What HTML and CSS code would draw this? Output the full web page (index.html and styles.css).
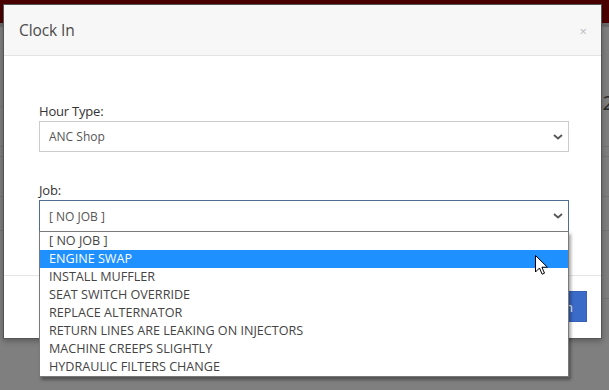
FILE: index.html
```html
<!DOCTYPE html>
<html>
<head>
<meta charset="utf-8">
<link rel="stylesheet" href="styles.css">
</head>
<body>
<div class="page">
  <div class="topbar"></div>
  <div class="subbar"></div>
  <div class="bg-content">
    <div class="bg-row r1"><span class="bg-num">2</span></div>
    <div class="bg-row r2"></div>
    <div class="bg-row r3"></div>
    <div class="bg-row r4"></div>
    <div class="bg-row r5"></div>
    <div class="bg-row r6"></div>
  </div>
</div>

<div class="modal">
  <div class="modal-header">
    <h4 class="modal-title">Clock In</h4>
    <span class="close">×</span>
  </div>
  <div class="modal-body">
    <div class="form-group">
      <label class="label">Hour Type:</label>
      <div class="select-wrap">
        <select class="select"><option>ANC Shop</option></select>
        <svg class="chev" width="10" height="6" viewBox="0 0 10 6"><path d="M1 1l4 3.5L9 1" fill="none" stroke="#555" stroke-width="1.8"/></svg>
      </div>
    </div>
    <div class="form-group job">
      <label class="label">Job:</label>
      <div class="select-wrap">
        <select class="select focus"><option>[ NO JOB ]</option></select>
        <svg class="chev" width="10" height="6" viewBox="0 0 10 6"><path d="M1 1l4 3.5L9 1" fill="none" stroke="#555" stroke-width="1.8"/></svg>
      </div>
    </div>
  </div>
  <div class="modal-footer">
    <button class="btn">Clock In</button>
  </div>
</div>

<ul class="dropdown">
  <li>[ NO JOB ]</li>
  <li class="hl">ENGINE SWAP</li>
  <li>INSTALL MUFFLER</li>
  <li>SEAT SWITCH OVERRIDE</li>
  <li>REPLACE ALTERNATOR</li>
  <li>RETURN LINES ARE LEAKING ON INJECTORS</li>
  <li>MACHINE CREEPS SLIGHTLY</li>
  <li>HYDRAULIC FILTERS CHANGE</li>
</ul>

<svg class="cursor" width="13" height="21" viewBox="0 0 13 21"><path d="M0.5 0.5v16.5l4-4 2.6 6.2 2.4-1-2.6-6h5.5z" fill="#fff" stroke="#000" stroke-width="1" stroke-linejoin="miter"/></svg>
</body>
</html>
```

FILE: styles.css
```css
* { box-sizing: border-box; }
html, body { margin: 0; padding: 0; }
body {
  width: 609px;
  height: 390px;
  overflow: hidden;
  background: #7f7f7f;
  font-family: "Open Sans", "Noto Sans", sans-serif;
  position: relative;
}
.page { width: 609px; height: 390px; }
.topbar { height: 23px; background: #4b0000; }
.subbar { height: 4px; background: #6a6a6a; }
.bg-content { padding-top: 60px; }
.bg-row {
  height: 44px;
  border-bottom: 1px solid #747474;
  position: relative;
}
.r1 { height: 20px; border-bottom: 1px solid #777; }
.bg-num {
  position: absolute;
  right: -5px;
  top: 2px;
  font-size: 20px;
  color: #2a2a2a;
}
.r2 { height: 40px; }
.r3 { height: 10px; }
.r4 { height: 40px; }
.r5 { height: 34px; }
.r6 { height: 68px; border-left: 1px solid #747474; margin-left: 64px; }

.modal {
  position: absolute;
  left: 3px;
  top: 4px;
  width: 599px;
  height: 335px;
  background: #fff;
  border: 1px solid #555;
  box-shadow: 0 2px 6px rgba(0,0,0,.3);
  display: flex;
  flex-direction: column;
}
.modal-header {
  height: 51px;
  flex: none;
  background: #f7f7f7;
  border-bottom: 1px solid #e3e3e3;
  display: flex;
  align-items: center;
  justify-content: space-between;
  padding: 0 14px 0 15px;
}
.modal-title {
  margin: 0;
  font-size: 15.5px;
  font-weight: 400;
  color: #4a4a4a;
  letter-spacing: -0.1px;
}
.close {
  font-size: 13px;
  color: #bbb;
  line-height: 1;
  margin-top: 2px;
}
.modal-body {
  flex: 1;
  padding: 46px 32px 0 35px;
}
.form-group { display: flex; flex-direction: column; }
.job { margin-top: 29px; }
.label {
  font-size: 13px;
  line-height: 18px;
  height: 18px;
  color: #333;
  margin-bottom: 1px;
  letter-spacing: -0.2px;
}
.select-wrap { display: grid; }
.select-wrap > * { grid-area: 1 / 1; }
.select {
  -webkit-appearance: none;
  appearance: none;
  height: 31px;
  width: 100%;
  border: 1px solid #ccc;
  border-radius: 0;
  background: #fff;
  font-family: "Open Sans", "Noto Sans", sans-serif;
  font-size: 12px;
  color: #555;
  padding: 0 9px;
  outline: none;
}
.select.focus { border-color: #4e6e90; height: 32px; }
.chev { justify-self: end; align-self: center; margin-right: 6px; pointer-events: none; }
.modal-footer {
  height: 63px;
  flex: none;
  border-top: 1px solid #e5e5e5;
  display: flex;
  justify-content: flex-end;
  align-items: center;
  padding: 0 14px 1px 0;
}
.btn {
  height: 31px;
  background: #3a6bc9;
  border: 1px solid #3560b6;
  color: #fff;
  font-family: "Open Sans", "Noto Sans", sans-serif;
  font-size: 13px;
  padding: 0 13px;
  border-radius: 0;
}

.dropdown {
  position: absolute;
  left: 39px;
  top: 231px;
  width: 530px;
  margin: 0;
  padding: 0;
  list-style: none;
  background: #fff;
  border: 1px solid #7a7a7a;
  box-shadow: 2px 3px 3px rgba(0,0,0,.35);
}
.dropdown li {
  height: 18px;
  line-height: 18px;
  padding-left: 9px;
  font-family: "Open Sans", "Noto Sans", sans-serif;
  font-size: 12.6px;
  color: #444;
  white-space: nowrap;
}
.dropdown li.hl { background: #1e90ff; color: #fff; }
.cursor { position: absolute; left: 535px; top: 255px; }
```
